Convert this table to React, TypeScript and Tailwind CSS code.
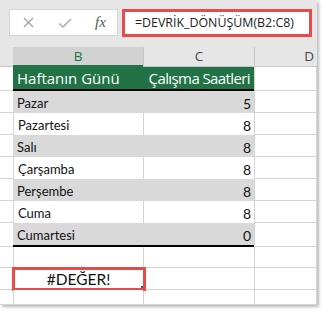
import React from "react";

const rows: [string, string, boolean][] = [
  ["Pazar", "5", true],
  ["Pazartesi", "8", false],
  ["Salı", "8", true],
  ["Çarşamba", "8", false],
  ["Perşembe", "8", true],
  ["Cuma", "8", false],
  ["Cumartesi", "0", true],
];

function DataRow({ name, val, gray, last }: { name: string; val: string; gray: boolean; last: boolean }) {
  const tb = last ? "border-b-2 border-black" : "";
  return (
    <div className={`flex shrink-0 ${last ? "h-[24px]" : "h-[22px]"}`}>
      <div className="w-[13px] bg-white border-b border-[#d4d4d4]" />
      <div
        className={`w-[130px] flex items-center pl-[4px] text-[#111] whitespace-nowrap ${tb} ${
          gray ? "bg-[#d9d9d9]" : "bg-white border-l border-[#d4d4d4]"
        }`}
      >
        <span className="pt-[3px]">{name}</span>
      </div>
      <div
        className={`w-[111px] flex items-center justify-end pr-[3px] text-[#111] text-[14px] ${tb} ${
          gray ? "bg-[#d9d9d9]" : "bg-white border-l border-[#d4d4d4]"
        }`}
      >
        <span className="pt-[3px]">{val}</span>
      </div>
      <div className="flex-1 bg-white border-l border-b border-r border-[#d4d4d4]" />
    </div>
  );
}

function EmptyRow({ h, children }: { h: string; children?: React.ReactNode }) {
  return (
    <div className={`flex shrink-0 ${h}`}>
      <div className="w-[13px] bg-white border-b border-[#d4d4d4]" />
      <div className="w-[130px] bg-white border-l border-b border-[#d4d4d4] relative flex items-center justify-center">
        {children}
      </div>
      <div className="w-[111px] bg-white border-l border-b border-[#d4d4d4]" />
      <div className="flex-1 bg-white border-l border-b border-r border-[#d4d4d4]" />
    </div>
  );
}

export default function App() {
  return (
    <div className="w-[324px] h-[313px] bg-white" style={{ fontFamily: "Lato, 'Open Sans', sans-serif" }}>
      <div className="w-[317px] h-[305px] bg-[#e6e6e6] overflow-hidden flex flex-col shadow-[2px_2px_3px_rgba(0,0,0,0.28)]">
        {/* formula bar */}
        <div className="h-[47px] shrink-0 flex items-start pt-[9px] pl-[9px] gap-[4px]">
          <div className="w-[109px] h-[27px] bg-white border border-[#d6d6d6] flex items-center pl-[13px]">
            <svg width="11" height="11" viewBox="0 0 11 11">
              <path d="M1 1 L10 10 M10 1 L1 10" stroke="#a3a3a3" strokeWidth="1.3" fill="none" />
            </svg>
            <svg width="14" height="10" viewBox="0 0 14 10" className="ml-[24px]">
              <path d="M1 5.5 L5 9 L13 1" stroke="#b0b0b0" strokeWidth="1.6" fill="none" />
            </svg>
            <span
              className="ml-[23px] italic text-[15px] text-[#555] leading-none"
              style={{ fontFamily: "'Liberation Serif', serif" }}
            >
              fx
            </span>
          </div>
          <div
            className="w-[190px] h-[28px] bg-white border-[3px] border-[#e84a4a] flex items-center pl-[10px] text-[12.4px] text-[#222] whitespace-nowrap"
            style={{ fontFamily: "'Open Sans', sans-serif" }}
          >
            =DEVRİK_DÖNÜŞÜM(B2:C8)
          </div>
        </div>

        {/* column headers */}
        <div className="h-[20px] flex shrink-0 text-[13.5px]" style={{ fontFamily: "'Open Sans', sans-serif" }}>
          <div className="w-[13px] border-b border-[#c6c6c6]" />
          <div className="w-[130px] bg-[#d2d2d2] border-b-2 border-[#217346] flex items-center justify-center text-[#217346]">
            B
          </div>
          <div className="w-[111px] border-l border-b border-[#c6c6c6] flex items-center justify-center text-[#444]">
            C
          </div>
          <div className="flex-1 border-l border-b border-[#c6c6c6] flex items-center justify-end pr-[3px] text-[#444]">
            D
          </div>
        </div>

        {/* table header */}
        <div className="h-[24px] flex shrink-0 text-[15px] whitespace-nowrap" style={{ fontFamily: "'Open Sans', sans-serif" }}>
          <div className="w-[13px] bg-white border-b border-[#d4d4d4]" />
          <div className="w-[130px] bg-[#217346] border-b-2 border-black flex items-center pl-[4px] text-white">
            <span>Haftanın Günü</span>
          </div>
          <div className="w-[111px] bg-[#217346] border-b-2 border-black flex items-center justify-end pr-[4px] text-white">
            <span className="tracking-[-0.6px]">Çalışma Saatleri</span>
          </div>
          <div className="flex-1 bg-white border-l border-b border-r border-[#d4d4d4]" />
        </div>

        <div className="flex flex-col text-[13px]">
          {rows.map(([n, v, g], i) => (
            <DataRow key={n} name={n} val={v} gray={g} last={i === rows.length - 1} />
          ))}
        </div>

        <EmptyRow h="h-[21px]" />
        <EmptyRow h="h-[22px]">
          <span className="text-[15.5px] text-[#111] pt-[2px]">#DEĞER!</span>
          <div className="absolute left-[-2px] right-[-3px] top-[-1px] bottom-[-2px] border-[3px] border-[#e84a4a]" />
          <div className="absolute right-[0px] bottom-[1px] w-[2px] h-[2px] bg-[#217346]" />
        </EmptyRow>
        <EmptyRow h="flex-1" />
      </div>
    </div>
  );
}
